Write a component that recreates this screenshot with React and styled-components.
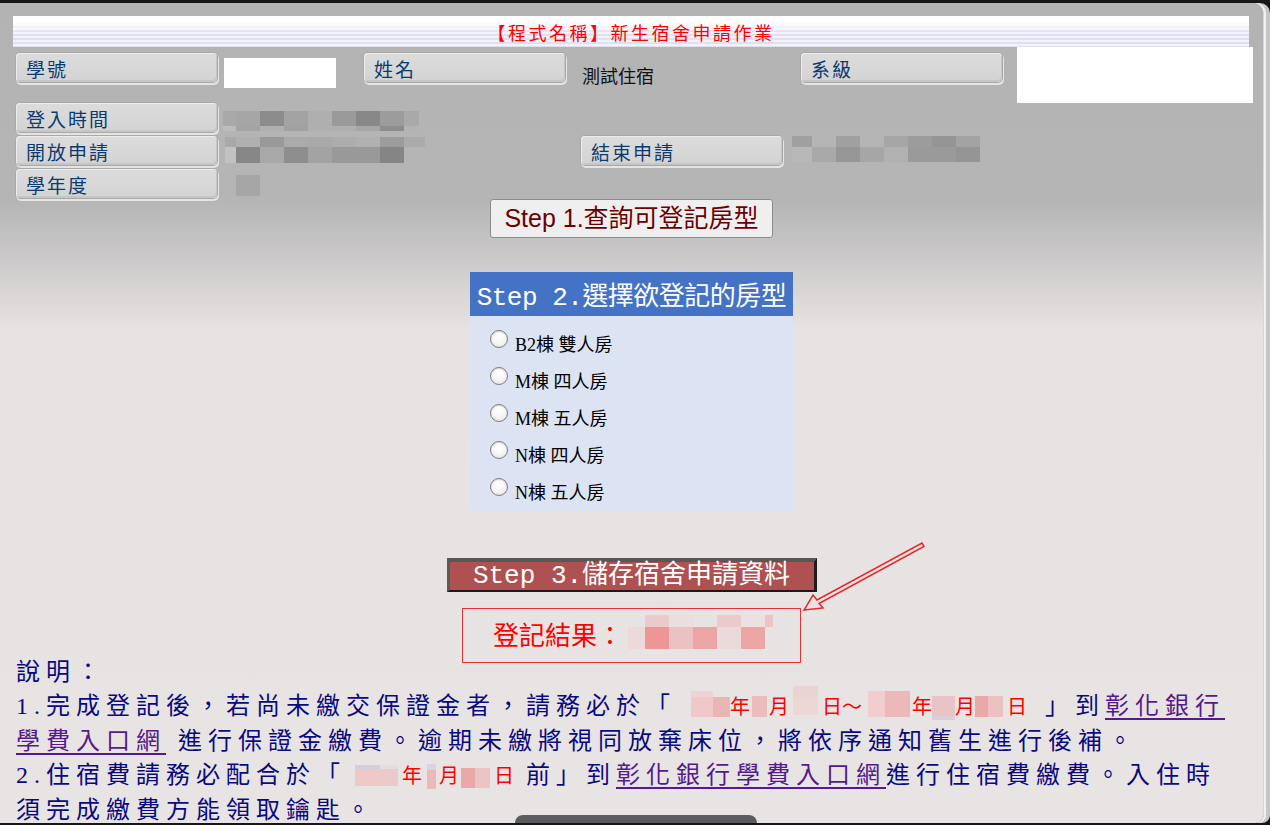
import React from 'react';
import styled, { createGlobalStyle } from 'styled-components';

const GlobalStyle = createGlobalStyle`
  html, body {
    margin: 0;
    padding: 0;
    background: #161616;
    overflow: hidden;
  }
  body {
    font-family: "Noto Sans CJK TC", sans-serif;
  }
`;

const Frame = styled.div`
  position: relative;
  width: 1270px;
  height: 825px;
  padding-top: 3px;
  box-sizing: border-box;
`;

const Panel = styled.div`
  position: relative;
  width: 1263px;
  height: 820px;
  overflow: hidden;
  border-radius: 0 10px 8px 0;
  background: linear-gradient(
    to bottom,
    #b3b3b3 0,
    #b5b5b5 197px,
    #e7e3e2 327px,
    #e8e4e3 100%
  );
  box-shadow: 1px 0 0 #d6d6d6, 3px 0 0 #f1f1f1, 7px 0 0 #c6c6c6;
`;

const TitleBar = styled.div`
  margin: 13px 14px 0 13px;
  height: 31px;
  display: flex;
  align-items: center;
  justify-content: center;
  background:
    linear-gradient(to bottom, #fff 0, #fff 6px, rgba(255, 255, 255, 0) 17px),
    repeating-linear-gradient(to bottom, #f3f3fb 0 2px, #e0e0f2 2px 4px);
  color: #ff0000;
  font-size: 18px;
  letter-spacing: 2.5px;
`;

/* ---------- basic info table ---------- */

const InfoGrid = styled.div`
  display: grid;
  margin-left: 16px;
  grid-template-columns: 201px 147px 217px 220px 216px 236px;
  grid-template-rows: 56px 33px 33px 30px;
`;

const FieldLabel = styled.div`
  grid-column: ${p => p.$col || 1};
  grid-row: ${p => p.$row};
  margin-top: ${p => p.$top || 0}px;
  width: 201px;
  height: 29px;
  box-sizing: border-box;
  padding: 2px 0 0 10px;
  display: flex;
  align-items: center;
  border-radius: 4px;
  background: linear-gradient(to bottom, #dcdcdc, #d3d3d3);
  box-shadow:
    inset 1px 1px 0 #ececec,
    inset -1px -2px 0 #c6c6c6,
    0 0 0 1px #a9a9a9,
    1px 2px 0 1px #e4e4e4;
  color: #0b3a72;
  font-size: 19px;
  letter-spacing: 2px;
`;

const WhiteField = styled.div`
  grid-column: ${p => p.$col};
  grid-row: 1;
  margin-left: ${p => p.$ml || 0}px;
  margin-top: ${p => p.$mt || 0}px;
  width: ${p => p.$w}px;
  height: ${p => p.$h}px;
  background: #fff;
`;

const PlainValue = styled.div`
  grid-column: 4;
  grid-row: 1;
  align-self: center;
  margin-left: 1px;
  color: #111;
  font-size: 18px;
`;

const Slot = styled.div`
  grid-column: ${p => p.$col};
  grid-row: ${p => p.$row};
  margin-left: ${p => p.$ml || 0}px;
  margin-top: ${p => p.$mt || 0}px;
`;

/* ---------- pixelated masks ---------- */

const MosaicGrid = styled.span`
  display: inline-grid;
  grid-template-columns: ${p => p.$cols};
  grid-template-rows: ${p => p.$rows};
  margin-left: ${p => p.$ml || 0}px;
  vertical-align: middle;
  transform: translateY(${p => p.$dy || 0}px);
`;

const MosaicCell = styled.span`
  background: ${p => p.$c};
`;

function Mosaic({ data, ml, dy }) {
  return (
    <MosaicGrid $cols={data.cols} $rows={data.rows} $ml={ml} $dy={dy}>
      {data.cells.map((c, i) => (
        <MosaicCell key={i} $c={c} />
      ))}
    </MosaicGrid>
  );
}

const mask = {
  login: {
    cols: '13px 24px 24px 24px 24px 24px 24px 24px 15px',
    rows: '15px 5px',
    cells: [
      '#a9a9a9', '#a6a6a6', '#8c8c8c', '#a3a3a3', '#afafaf', '#9a9a9a', '#888888', '#9c9c9c', '#a9a9a9',
      '#bdbdbd', '#a4a4a4', '#b0b0b0', '#a1a1a1', '#b0b0b0', '#afafaf', '#a6a6a6', '#8d8d8d', '#b3b3b3',
    ],
  },
  open: {
    cols: '11px 24px 24px 24px 24px 24px 24px 24px 21px',
    rows: '10px 16px',
    cells: [
      '#a9a9a9', '#b0b0b0', '#999999', '#aaaaaa', '#a9a9a9', '#adadad', '#b1b1b1', '#9c9c9c', '#ababab',
      '#c2c2c2', '#878787', '#a8a8a8', '#8e8e8e', '#a3a3a3', '#999999', '#999999', '#858585', 'transparent',
    ],
  },
  close: {
    cols: '20px 24px 24px 24px 24px 24px 24px 24px',
    rows: '11px 15px',
    cells: [
      '#a0a0a0', 'transparent', '#a0a0a0', 'transparent', '#a6a6a6', '#9c9c9c', '#959595', '#a3a3a3',
      '#b8b8b8', '#a9a9a9', '#969696', '#a6a6a6', '#b1b1b1', '#9a9a9a', '#9a9a9a', '#959595',
    ],
  },
  year: { cols: '24px', rows: '21px', cells: ['#a6a6a6'] },
  result: {
    cols: '17px 24px 24px 24px 24px 24px 8px',
    rows: '12px 22px',
    cells: [
      'transparent', '#eacaca', '#ebdede', '#e9e2e2', '#ebcaca', '#ece0e0', '#ecc4c4',
      '#ecd9d9', '#ee9696', '#ebc1c1', '#eba5a5', '#ebdada', '#eca6a6', 'transparent',
    ],
  },
  d1: { cols: '22px 17px', rows: '6px 20px', cells: ['#efd3d3', 'transparent', '#f0c8c8', '#e9b5b5'] },
  d2: { cols: '15px', rows: '21px', cells: ['#ebbcbc'] },
  d3: { cols: '25px', rows: '11px 18px', cells: ['#ecd3d3', '#edd6d6'] },
  d4: { cols: '17px 25px', rows: '26px', cells: ['#f1cdcd', '#ebb9b9'] },
  d5: { cols: '23px', rows: '20px 4px', cells: ['#e9c4c4', '#d9cde0'] },
  d6: { cols: '13px 15px', rows: '21px', cells: ['#eaa9a9', '#edc1c1'] },
  d7: { cols: '25px 18px', rows: '4px 17px', cells: ['#cfcfe0', '#e6dede', '#f0c8c8', '#eccaca'] },
  d8: { cols: '9px', rows: '6px 19px', cells: ['#d8d3e3', '#ebb9b9'] },
  d9: { cols: '14px 15px', rows: '20px', cells: ['#e9a9a9', '#ecc4c4'] },
};

/* ---------- steps ---------- */

const StepOneButton = styled.button`
  display: block;
  margin: 0 auto;
  width: 283px;
  height: 39px;
  padding: 0;
  box-sizing: border-box;
  border: 1px solid #8b8b8b;
  border-radius: 3px;
  background: #efefef;
  color: #6b0000;
  font-family: "Liberation Sans", "Noto Sans CJK TC", sans-serif;
  font-size: 25px;
  line-height: 37px;
  cursor: pointer;
`;

const RoomPanel = styled.div`
  width: 323px;
  margin: 34px auto 0;
`;

const RoomHeader = styled.div`
  height: 44px;
  display: flex;
  align-items: center;
  justify-content: center;
  background: #4472c4;
  color: #fff;
  font-family: "Liberation Mono", "Noto Sans CJK TC", monospace;
  font-size: 26px;
  letter-spacing: -0.5px;
`;

const RoomList = styled.div`
  background: #dce3f3;
  padding: 8px 0 2px 20px;
`;

const RoomOption = styled.label`
  display: flex;
  align-items: center;
  height: 37px;
  gap: 7px;
  color: #000;
  font-family: "Liberation Serif", "Noto Sans CJK TC", serif;
  font-size: 18px;
`;

const RadioDot = styled.input.attrs({ type: 'radio' })`
  appearance: none;
  margin: 0 0 7px 0;
  width: 18px;
  height: 18px;
  box-sizing: border-box;
  border-radius: 50%;
  border: 1.5px solid #7d7d7d;
  background: radial-gradient(circle at 50% 35%, #ffffff 0, #f4f4f4 55%, #dadada 100%);
  box-shadow: inset 0 1px 1px rgba(0, 0, 0, 0.12);
`;

const SaveButton = styled.div`
  width: 370px;
  height: 34px;
  margin: 47px auto 0;
  box-sizing: border-box;
  border-style: solid;
  border-width: 4px 3px 2px 3px;
  border-color: #575757 #1e1e1e #1a1a1a #5a5a5a;
  background: #b05151;
  color: #fff;
  display: flex;
  align-items: center;
  justify-content: center;
  font-family: "Liberation Mono", "Noto Sans CJK TC", monospace;
  font-size: 26px;
  line-height: 28px;
`;

const ResultBox = styled.div`
  width: 339px;
  height: 55px;
  margin: 16px auto 0;
  box-sizing: border-box;
  border: 1px solid #e23232;
  padding: 4px 0 0 30px;
  display: flex;
  align-items: center;
`;

const ResultLabel = styled.span`
  color: #ff0000;
  font-size: 26px;
  line-height: 40px;
  margin-top: -8px;
`;

const ResultMask = styled.span`
  margin-top: -12px;
  margin-left: 5px;
  display: flex;
`;

/* ---------- notes ---------- */

const Notes = styled.div`
  margin-top: -8px;
  padding-left: 16px;
  width: 1224px;
  color: #0a0a80;
  font-family: "Liberation Serif", "Noto Sans CJK TC", serif;
  font-size: 24px;
  line-height: 34px;
  letter-spacing: 6px;
`;

const NoteLine = styled.div``;

const BankLink = styled.a`
  color: #551a8b;
  text-decoration: underline;
  text-decoration-thickness: 2px;
  text-underline-offset: 4px;
`;

const DateMark = styled.span`
  color: #ff0000;
  font-size: 20px;
  letter-spacing: 0;
  margin-left: ${p => p.$ml || 0}px;
  margin-right: ${p => p.$mr || 0}px;
`;

/* ---------- overlays ---------- */

const Pointer = styled.svg`
  position: absolute;
  left: 0;
  top: 0;
  pointer-events: none;
`;

const BottomTab = styled.div`
  position: absolute;
  left: 515px;
  bottom: 2px;
  width: 242px;
  height: 8px;
  border-radius: 9px 9px 0 0;
  background: #5b5c5f;
`;

const rooms = ['B2棟 雙人房', 'M棟 四人房', 'M棟 五人房', 'N棟 四人房', 'N棟 五人房'];

export default function App() {
  return (
    <>
      <GlobalStyle />
      <Frame>
        <Panel>
          <TitleBar>【程式名稱】新生宿舍申請作業</TitleBar>

          <InfoGrid>
            <FieldLabel $row={1} $top={6}>學號</FieldLabel>
            <WhiteField $col={2} $ml={7} $mt={11} $w={112} $h={30} />
            <FieldLabel $col={3} $row={1} $top={6}>姓名</FieldLabel>
            <PlainValue>測試住宿</PlainValue>
            <FieldLabel $col={5} $row={1} $top={6}>系級</FieldLabel>
            <WhiteField $col={6} $w={236} $h={56} />

            <FieldLabel $row={2}>登入時間</FieldLabel>
            <Slot $col={2} $row={2} $ml={6} $mt={3}>
              <Mosaic data={mask.login} />
            </Slot>

            <FieldLabel $row={3}>開放申請</FieldLabel>
            <Slot $col="2 / span 2" $row={3} $ml={8} $mt={-1}>
              <Mosaic data={mask.open} />
            </Slot>
            <FieldLabel $col={4} $row={3}>結束申請</FieldLabel>
            <Slot $col={5} $row={3} $ml={-9} $mt={-2}>
              <Mosaic data={mask.close} />
            </Slot>

            <FieldLabel $row={4}>學年度</FieldLabel>
            <Slot $col={2} $row={4} $ml={19} $mt={2}>
              <Mosaic data={mask.year} />
            </Slot>
          </InfoGrid>

          <StepOneButton>Step 1.查詢可登記房型</StepOneButton>

          <RoomPanel>
            <RoomHeader>Step 2.選擇欲登記的房型</RoomHeader>
            <RoomList>
              {rooms.map(r => (
                <RoomOption key={r}>
                  <RadioDot name="room" />
                  {r}
                </RoomOption>
              ))}
            </RoomList>
          </RoomPanel>

          <SaveButton>Step 3.儲存宿舍申請資料</SaveButton>

          <ResultBox>
            <ResultLabel>登記結果：</ResultLabel>
            <ResultMask>
              <Mosaic data={mask.result} />
            </ResultMask>
          </ResultBox>

          <Notes>
            <NoteLine>說明：</NoteLine>
            <NoteLine>
              1.完成登記後，若尚未繳交保證金者，請務必於「
              <Mosaic data={mask.d1} ml={15} dy={-4} />
              <DateMark>年</DateMark>
              <Mosaic data={mask.d2} ml={2} dy={-2} />
              <DateMark $ml={2}>月</DateMark>
              <Mosaic data={mask.d3} ml={4} dy={-8} />
              <DateMark $ml={4}>日～</DateMark>
              <Mosaic data={mask.d4} ml={6} dy={-4} />
              <DateMark $ml={2}>年</DateMark>
              <Mosaic data={mask.d5} />
              <DateMark>月</DateMark>
              <Mosaic data={mask.d6} dy={-2} />
              <DateMark $ml={4} $mr={18}>日</DateMark>
              」到<BankLink href="#">彰化銀行學費入口網</BankLink> 進行保證金繳費。逾期未繳將視同放棄床位，將依序通知舊生進行後補。
            </NoteLine>
            <NoteLine>
              2.住宿費請務必配合於「
              <Mosaic data={mask.d7} ml={9} dy={-2} />
              <DateMark $ml={4}>年</DateMark>
              <Mosaic data={mask.d8} ml={5} dy={-1} />
              <DateMark $ml={3}>月</DateMark>
              <Mosaic data={mask.d9} ml={2} dy={1} />
              <DateMark $ml={4} $mr={12}>日</DateMark>
              前」到<BankLink href="#">彰化銀行學費入口網</BankLink>進行住宿費繳費。入住時須完成繳費方能領取鑰匙。
            </NoteLine>
          </Notes>

          <Pointer width="1263" height="820" viewBox="0 3 1263 820">
            <polygon
              points="804,610 823,608 819,603.5 924,546.5 922,543 817,600 813,595"
              fill="none"
              stroke="#e8262a"
              strokeWidth="1.5"
              strokeLinejoin="miter"
            />
          </Pointer>
        </Panel>
        <BottomTab />
      </Frame>
    </>
  );
}
